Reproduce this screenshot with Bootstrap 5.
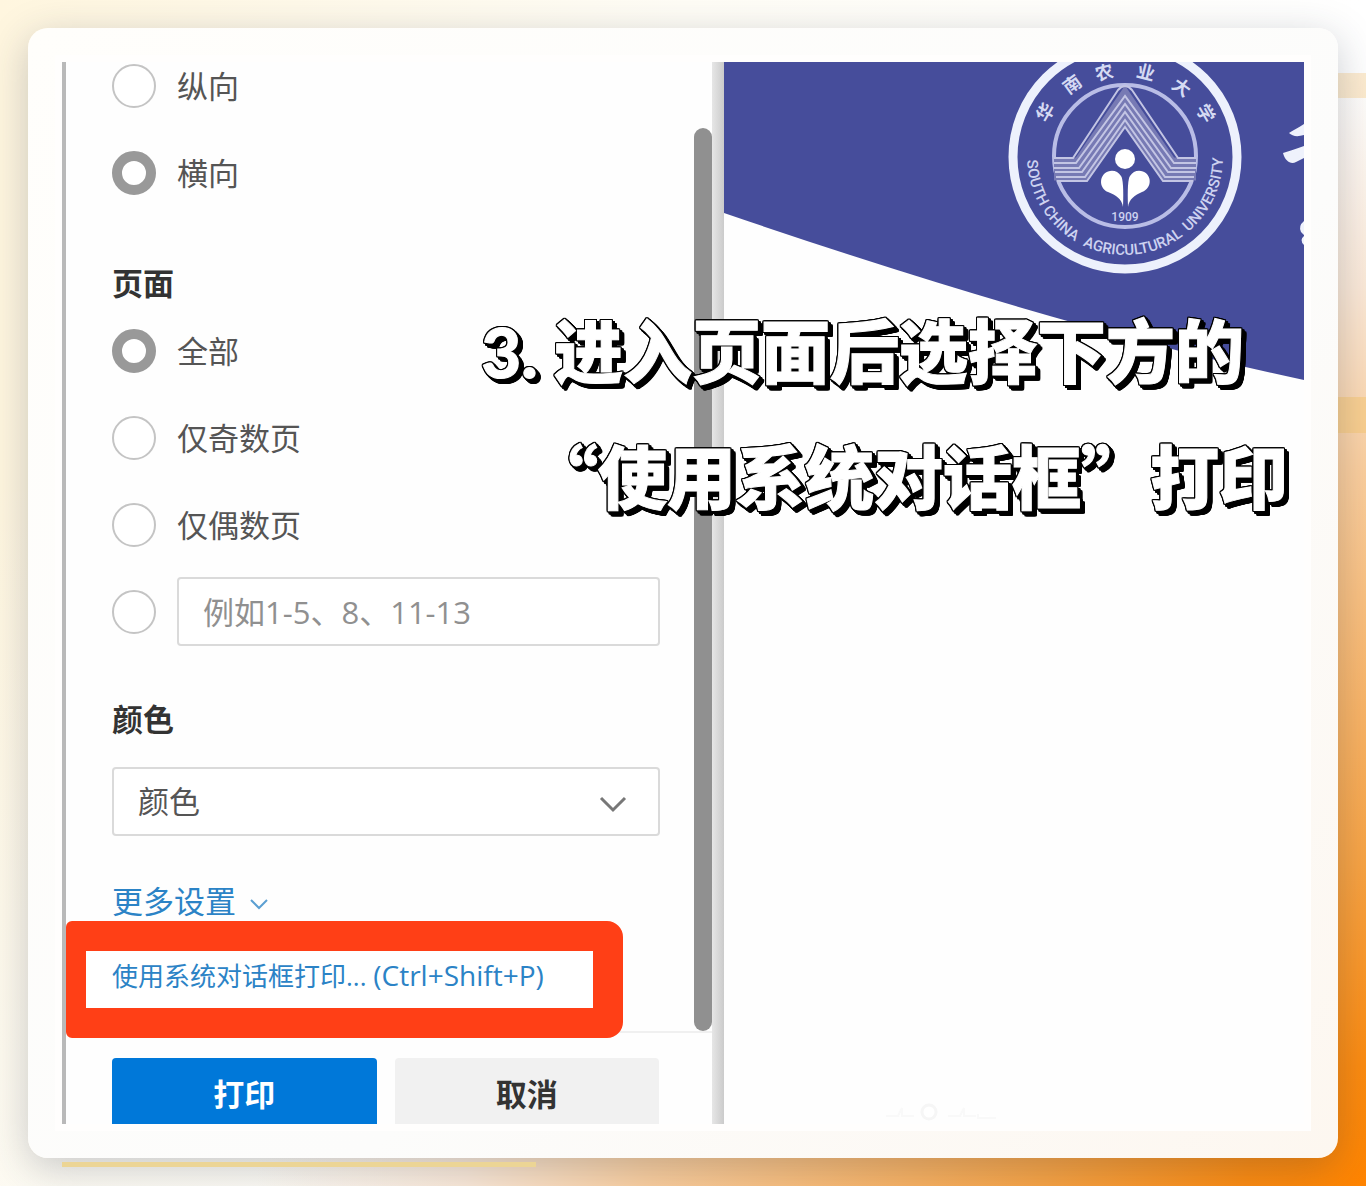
<!DOCTYPE html>
<html lang="zh-CN">
<head>
<meta charset="utf-8">
<meta name="viewport" content="width=device-width, initial-scale=1">
<title>打印设置</title>
<link href="https://cdn.jsdelivr.net/npm/bootstrap@5.3.0/dist/css/bootstrap.min.css" rel="stylesheet">
<style>
body{min-height:100vh;overflow-x:hidden;font-family:"Open Sans","Noto Sans CJK SC",sans-serif;font-size:31px;line-height:46px;color:#555;
 background:radial-gradient(circle at 100% 100%,#ff8400 0,#fc8b10 120px,#f8a343 320px,#fbcf9f 720px,#fbe9d8 900px,rgba(255,255,255,0) 1110px),linear-gradient(to bottom,rgba(255,255,255,0) 40%,rgba(253,253,251,.7) 100%),linear-gradient(to right,#fff6df,#fffdf6 50%,#fff)}
.page-wrap{padding:28px;position:relative}
.deco{position:absolute;background:#f9c97c}
.deco-a{right:0;top:73px;width:60px;height:25px;opacity:.35}
.deco-b{right:0;top:397px;width:60px;height:36px;opacity:.6}
.deco-c{left:62px;bottom:19px;width:474px;height:5px;background:#ecd595;z-index:1}
.sheet{position:relative;padding:34px;border-radius:20px;background:linear-gradient(135deg,#fffefb,#fcfcfb 60%,#fdf7f0);box-shadow:0 10px 40px rgba(40,50,70,.25)}
.stage{position:relative;background:#fefefe;box-shadow:0 0 0 7px #fffefd}
.print-panel{flex:0 0 650px;border-left:4px solid #b9b9b9;overflow:hidden}
.panel-edge{flex:0 0 12px;background:linear-gradient(to right,#e6e6e6,#cbcbcb)}
.panel-body{padding:0 34px 0 46px}
.opt-first{margin-top:-20px;margin-bottom:43px}
.opt{height:87px;display:flex;align-items:center;gap:21px}
.opt .form-check-input{flex:none;width:44px;height:44px;margin:0;border:2px solid #c4c4c4;background:#fff}
.opt .form-check-input:checked{border:10px solid #999;background:#fff}
.sec-title{font-size:31px;line-height:48px;font-weight:700;color:#333;margin:0}
.sec-color{padding:40px 0 24px}
.more-row{padding-top:42px}
.more-row svg{margin-left:14px}
.field{height:69px;font-size:31px;border:2px solid #dadada;border-radius:4px;color:#555;background:#fff;padding:0 24px}
.field::placeholder{color:#909090;opacity:1}
.chev{position:absolute;right:32px;top:28px}
.blue-link{color:#2b83c6;text-decoration:none}
.hot{position:relative;z-index:1;width:557px;margin:-3px 0 -7px -46px;border:30px solid #ff3f16;border-left-width:20px;border-radius:6px 16px 16px 6px;padding:0 26px;height:117px;font-size:26px;line-height:50px;background:#fff}
.keys{font-size:28px;line-height:1}
.thumb-track{flex:0 0 18px;padding-top:66px}
.thumb{height:100%;border-radius:9px;background:#909090}
.foot{height:93px;border-top:2px solid #f0f0f0;padding:25px 53px 0 46px;gap:18px;overflow:hidden}
.foot .btn{height:72px;font-size:31px;font-weight:700;line-height:1;border:0;border-radius:4px}
.btn-go{background:#0078d9;color:#fff}
.btn-no{background:#f1f1f1;color:#333}
.caption-over{position:absolute;right:16px;top:223px;text-align:right;font-family:"Noto Sans CJK SC",sans-serif;font-weight:900;font-size:69px;line-height:126px;color:#fff;white-space:nowrap;-webkit-text-stroke:1px #fff;
 filter:drop-shadow(1px 0 0 #000) drop-shadow(-1px 0 0 #000) drop-shadow(0 1px 0 #000) drop-shadow(0 -1px 0 #000) drop-shadow(2px 2px 0 #000) drop-shadow(2px 2px 0 #000)}
.caption-over .first{padding-right:44px}
.caption-over .lat{font-family:Lato,"Open Sans",sans-serif;line-height:1}
</style>
<script src="https://cdn.jsdelivr.net/npm/bootstrap@5.3.0/dist/js/bootstrap.bundle.min.js"></script>
</head>
<body>
<main class="page-wrap">
 <div class="deco deco-a"></div><div class="deco deco-b"></div><div class="deco deco-c"></div>
 <div class="sheet">
  <div class="stage d-flex">
   <form class="print-panel d-flex flex-column">
    <div class="d-flex">
     <div class="panel-body flex-grow-1">
      <div class="opt-first">
       <div class="opt"><input class="form-check-input" type="radio" name="dir" id="d1"><label for="d1">纵向</label></div>
       <div class="opt"><input class="form-check-input" type="radio" name="dir" id="d2" checked><label for="d2">横向</label></div>
      </div>
      <h2 class="sec-title">页面</h2>
      <div class="opt"><input class="form-check-input" type="radio" name="pg" id="p1" checked><label for="p1">全部</label></div>
      <div class="opt"><input class="form-check-input" type="radio" name="pg" id="p2"><label for="p2">仅奇数页</label></div>
      <div class="opt"><input class="form-check-input" type="radio" name="pg" id="p3"><label for="p3">仅偶数页</label></div>
      <div class="opt"><input class="form-check-input" type="radio" name="pg" id="p4" aria-label="自定义页码"><input class="form-control field" type="text" placeholder="例如1-5、8、11-13" aria-label="页码范围"></div>
      <h2 class="sec-title sec-color"><label class="d-block" for="color">颜色</label></h2>
      <div class="position-relative">
       <select class="form-control field" id="color"><option>颜色</option></select>
       <svg class="chev" width="30" height="18" viewBox="0 0 30 18" fill="none" stroke="#777" stroke-width="3"><path d="M3 3l12 12L27 3"/></svg>
      </div>
      <div class="more-row"><a class="blue-link" href="#">更多设置<svg width="18" height="11" viewBox="0 0 18 11" fill="none" stroke="#5b9fd2" stroke-width="2"><path d="M1 1l8 8 8-8"/></svg></a></div>
      <div class="hot"><a class="blue-link" href="#">使用系统对话框打印... <span class="keys">(Ctrl+Shift+P)</span></a></div>
     </div>
     <div class="thumb-track"><div class="thumb"></div></div>
    </div>
    <div class="foot d-flex">
     <button type="button" class="btn btn-go flex-fill">打印</button>
     <button type="button" class="btn btn-no flex-fill">取消</button>
    </div>
   </form>
   <div class="panel-edge"></div>
   <div class="flex-grow-1 d-flex flex-column justify-content-between">
    <svg class="w-100" viewBox="0 0 580 320" role="img" aria-label="华南农业大学">
     <path d="M0 0H580V318Q336 266 0 151Z" fill="#464d9b"/>
     <g fill="none">
      <circle cx="401" cy="95" r="112" stroke="#edf1fc" stroke-width="9"/>
      <circle cx="401" cy="94" r="71" stroke="#b9bde6" stroke-width="4"/>
      <path d="M330 107H358L401 44L444 107H472" stroke="#777ab4" stroke-width="23"/>
      <g stroke="#c3c5e4" stroke-width="2">
       <path d="M330 96H349L394 28Q401 20 408 28L454 96H472"/>
       <path d="M330 101H352L401 34L450 101H472"/>
       <path d="M330 106H355L401 42L447 106H472"/>
       <path d="M331 110H358L401 50L444 110H471"/>
       <path d="M332 115H361L401 58L441 115H470"/>
       <path d="M333 119H363L401 65L439 119H469"/>
      </g>
     </g>
     <g fill="#fff">
      <circle cx="401" cy="97" r="10"/>
      <path d="M399 145C398 137 392 133 384 130C374 126 375 111 386 109Q393 108 397 114Q400 118 399 145ZM404 145C405 137 411 133 418 130C429 126 428 111 417 109Q410 108 406 114Q403 118 404 145Z"/>
     </g>
     <path id="arc" d="M303 95A98 98 0 0 0 499 95" fill="none"/>
     <g fill="#cdd2f0" font-family="Roboto,sans-serif" font-size="15" font-weight="500" text-anchor="middle">
      <text><textPath href="#arc" startOffset="17%">SOUTH CHINA</textPath></text>
      <text><textPath href="#arc" startOffset="53%">AGRICULTURAL</textPath></text>
      <text><textPath href="#arc" startOffset="86%">UNIVERSITY</textPath></text>
      <text x="401" y="159" font-size="12">1909</text>
     </g>
     <g fill="#d5daf3" font-family="'Noto Sans CJK SC',sans-serif" font-size="18" font-weight="700" text-anchor="middle">
      <text transform="translate(321 50) rotate(-60)" y="7">华</text>
      <text transform="translate(348 22) rotate(-36)" y="7">南</text>
      <text transform="translate(380 10) rotate(-14)" y="7">农</text>
      <text transform="translate(422 10) rotate(14)" y="7">业</text>
      <text transform="translate(458 25) rotate(36)" y="7">大</text>
      <text transform="translate(482 51) rotate(60)" y="7">学</text>
     </g>
     <path fill="#eff2fc" d="M580 62C574 66 569 68 565 71Q570 76 580 73ZM580 84Q566 89 559 91C561 99 567 103 572 100L580 96ZM580 159Q574 164 577 170L580 173ZM580 174Q575 178 580 183Z"/>
    </svg>
    <svg class="w-100" viewBox="0 0 580 24" fill="#fff" stroke="#f9f9f9" stroke-width="2"><path d="M162 16h12l4-8v8h12M224 16h12l4-8v8h12M254 14v4h18"/><circle cx="205" cy="12" r="7" stroke="#f6f6f6" stroke-width="3"/></svg>
   </div>
   <div class="caption-over"><div class="first"><span class="lat">3. </span>进入页面后选择下方的</div><div>“使用系统对话框”打印</div></div>
  </div>
 </div>
</main>
</body>
</html>
